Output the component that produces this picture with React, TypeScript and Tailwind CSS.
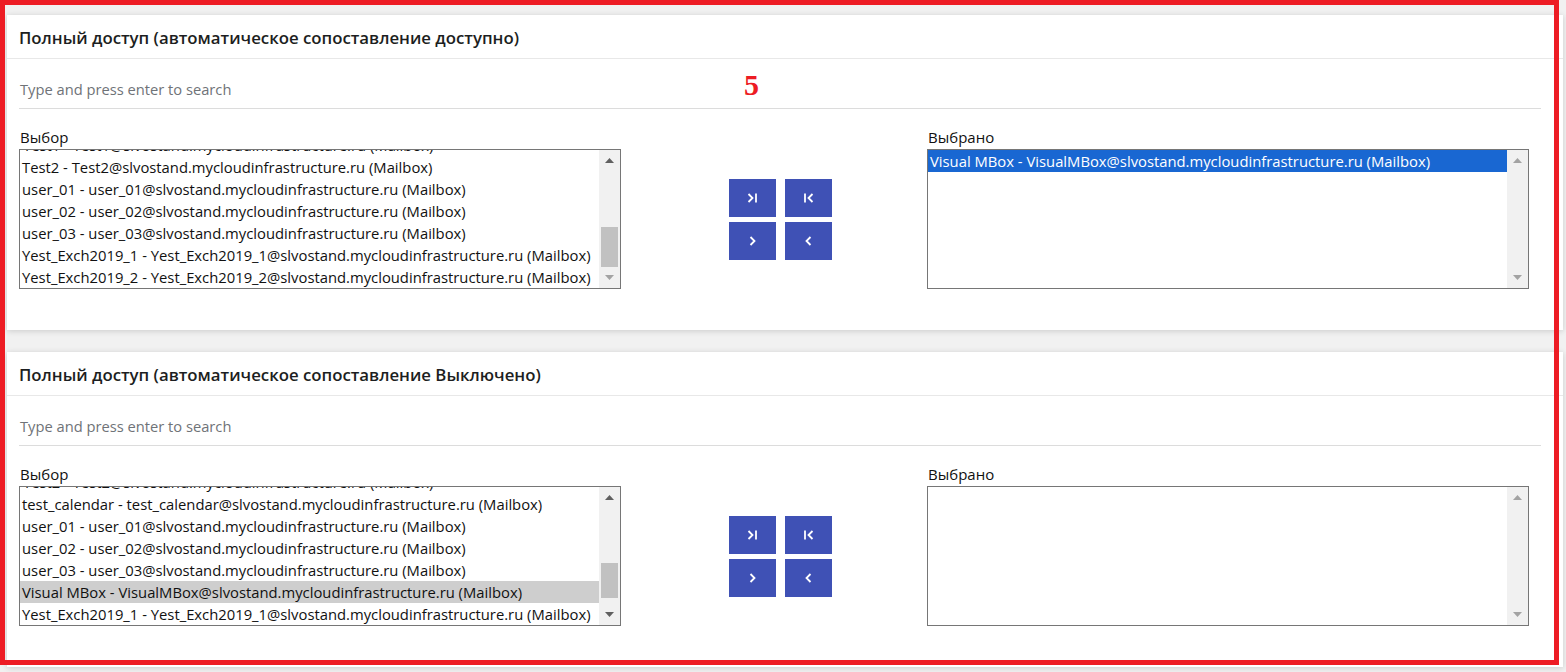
import React from "react";

const DOMAIN = "@slvostand.mycloudinfrastructure.ru (Mailbox)";

function ChevRightBar() {
  return (
    <svg width="11" height="10" viewBox="0 0 11 10" fill="none">
      <path d="M1.5 1 L5.5 5 L1.5 9" stroke="white" strokeWidth="1.8" />
      <path d="M9 0.5 V9.5" stroke="white" strokeWidth="1.8" />
    </svg>
  );
}
function BarChevLeft() {
  return (
    <svg width="11" height="10" viewBox="0 0 11 10" fill="none">
      <path d="M2 0.5 V9.5" stroke="white" strokeWidth="1.8" />
      <path d="M9.5 1 L5.5 5 L9.5 9" stroke="white" strokeWidth="1.8" />
    </svg>
  );
}
function ChevRight() {
  return (
    <svg width="7" height="10" viewBox="0 0 7 10" fill="none">
      <path d="M1.5 1 L5.5 5 L1.5 9" stroke="white" strokeWidth="1.8" />
    </svg>
  );
}
function ChevLeft() {
  return (
    <svg width="7" height="10" viewBox="0 0 7 10" fill="none">
      <path d="M5.5 1 L1.5 5 L5.5 9" stroke="white" strokeWidth="1.8" />
    </svg>
  );
}

function Arrow({ up, dark }: { up?: boolean; dark?: boolean }) {
  return (
    <svg width="9" height="5" viewBox="0 0 9 5">
      <path
        d={up ? "M0 5 L4.5 0 L9 5 Z" : "M0 0 L9 0 L4.5 5 Z"}
        fill={dark ? "#606060" : "#a3a3a3"}
      />
    </svg>
  );
}

type Item = { text: string; sel?: "blue" | "gray" };

function ListBox({
  items,
  partial,
  thumb,
  upDark,
  downDark,
}: {
  items: Item[];
  partial?: string;
  thumb?: { top: number; height: number };
  upDark?: boolean;
  downDark?: boolean;
}) {
  return (
    <div className="flex h-[140px] w-[602px] border border-[#767676] bg-white">
      <div className="relative flex-1 overflow-hidden text-[14.8px]">
        <div className={partial ? "-mt-[16px]" : ""}>
          {partial && (
            <div className="h-[22px] whitespace-nowrap px-[3px] leading-[22px] text-[#111]">
              {partial}
            </div>
          )}
          {items.map((it, i) => (
            <div
              key={i}
              className={
                "h-[22px] whitespace-nowrap px-[2px] leading-[22px] " +
                (it.sel === "blue"
                  ? "bg-[#1967d2] text-white"
                  : it.sel === "gray"
                  ? "bg-[#cecece] text-[#111]"
                  : "text-[#111]")
              }
            >
              {it.text}
            </div>
          ))}
        </div>
      </div>
      <div className="relative flex w-[21px] flex-col bg-[#f1f1f1]">
        <div className="flex h-[21px] items-center justify-center">
          <Arrow up dark={upDark} />
        </div>
        <div className="relative flex-1">
          {thumb && (
            <div
              className="absolute left-[2px] right-[2px] bg-[#c1c1c1]"
              style={{ top: thumb.top, height: thumb.height }}
            />
          )}
        </div>
        <div className="flex h-[21px] items-center justify-center">
          <Arrow dark={downDark} />
        </div>
      </div>
    </div>
  );
}

function Btn({ children }: { children: React.ReactNode }) {
  return (
    <div className="flex h-[38px] w-[47px] items-center justify-center bg-[#3f51b5]">
      {children}
    </div>
  );
}

function Card({
  title,
  left,
  right,
}: {
  title: string;
  left: React.ReactNode;
  right: React.ReactNode;
}) {
  return (
    <div className="ml-[7px] mr-[3px] bg-white pb-[41px] shadow-[0_1px_6px_rgba(0,0,0,0.16)]">
      <div className="border-b border-[#e8e8e8] pl-[12px] pt-[11px] pb-[9px] text-[16.8px] font-semibold leading-[23px] text-[#1c1e21]">
        {title}
      </div>
      <div className="pl-[12px] pr-[22px]">
        <div className="mt-[12px] flex h-[38px] items-center border-b border-[#dcdcdc] pl-[1px] text-[14.7px] text-[#6f7378]">
          Type and press enter to search
        </div>
        <div className="mt-[17px] flex">
          <div>
            <div className="h-[22px] pl-[1px] text-[15px] leading-[22px] text-[#111]">Выбор</div>
            <div className="mt-[1px]">{left}</div>
          </div>
          <div className="ml-[108px] mt-[23px] flex h-[140px] items-center">
            <div className="grid grid-cols-2 gap-x-[9px] gap-y-[5px]">
              <Btn><ChevRightBar /></Btn>
              <Btn><BarChevLeft /></Btn>
              <Btn><ChevRight /></Btn>
              <Btn><ChevLeft /></Btn>
            </div>
          </div>
          <div className="ml-[95px]">
            <div className="h-[22px] pl-[1px] text-[15px] leading-[22px] text-[#111]">Выбрано</div>
            <div className="mt-[1px]">{right}</div>
          </div>
        </div>
      </div>
    </div>
  );
}

export default function App() {
  return (
    <div className="relative h-[672px] w-[1566px] overflow-hidden bg-[#f1f1f1] pt-[15px] font-['Open_Sans',sans-serif] text-[15px]">
      <Card
        title="Полный доступ (автоматическое сопоставление доступно)"
        left={
          <ListBox
            partial={"Test1 - Test1" + DOMAIN}
            items={[
              { text: "Test2 - Test2" + DOMAIN },
              { text: "user_01 - user_01" + DOMAIN },
              { text: "user_02 - user_02" + DOMAIN },
              { text: "user_03 - user_03" + DOMAIN },
              { text: "Yest_Exch2019_1 - Yest_Exch2019_1" + DOMAIN },
              { text: "Yest_Exch2019_2 - Yest_Exch2019_2" + DOMAIN },
            ]}
            thumb={{ top: 56, height: 40 }}
            upDark
          />
        }
        right={
          <ListBox
            items={[{ text: "Visual MBox - VisualMBox" + DOMAIN, sel: "blue" }]}
          />
        }
      />
      <div className="h-[22px]" />
      <Card
        title="Полный доступ (автоматическое сопоставление Выключено)"
        left={
          <ListBox
            partial={"Test2 - Test2" + DOMAIN}
            items={[
              { text: "test_calendar - test_calendar" + DOMAIN },
              { text: "user_01 - user_01" + DOMAIN },
              { text: "user_02 - user_02" + DOMAIN },
              { text: "user_03 - user_03" + DOMAIN },
              { text: "Visual MBox - VisualMBox" + DOMAIN, sel: "gray" },
              { text: "Yest_Exch2019_1 - Yest_Exch2019_1" + DOMAIN },
            ]}
            thumb={{ top: 55, height: 35 }}
            upDark
            downDark
          />
        }
        right={<ListBox items={[]} />}
      />
      <div className="pointer-events-none absolute left-0 top-0 h-[665px] w-[1559px] border-[5px] border-[#ed1c24]" />
      <div className="pointer-events-none absolute left-[744px] top-[70px] font-['Liberation_Serif',serif] text-[30px] font-bold leading-[30px] text-[#ed1c24]">
        5
      </div>
    </div>
  );
}
